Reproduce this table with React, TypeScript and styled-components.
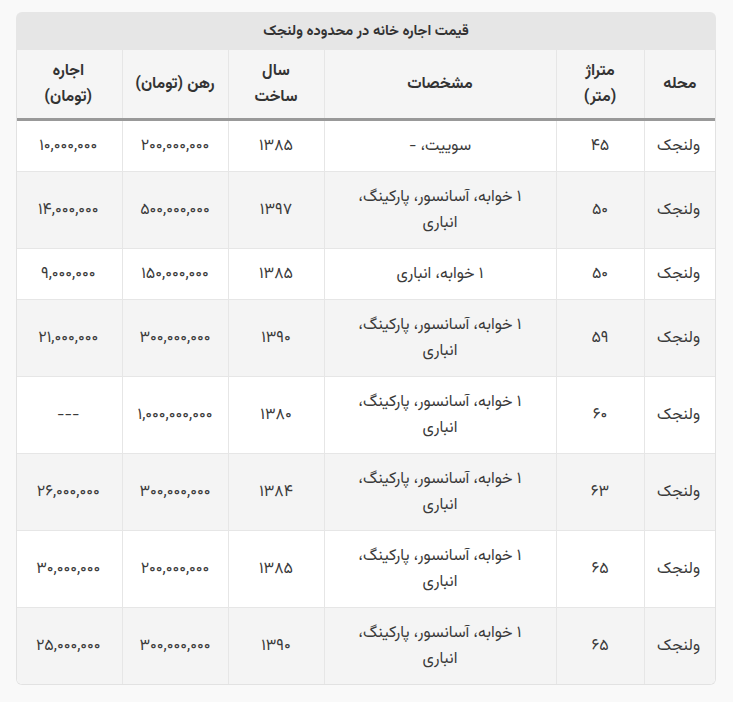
import React from 'react';
import styled, { createGlobalStyle } from 'styled-components';

const GlobalStyle = createGlobalStyle`
  html, body {
    margin: 0;
    padding: 0;
    background: #f9f9f9;
  }
  body {
    font-family: Vazirmatn, "DejaVu Sans", sans-serif;
    color: #333;
  }
`;

const Page = styled.div`
  padding: 12px 17px 16px 16px;
  direction: rtl;
`;

const Card = styled.div`
  width: 700px;
`;

const Caption = styled.div`
  height: 38px;
  display: flex;
  align-items: center;
  justify-content: center;
  background: #e6e6e6;
  border-radius: 6px 6px 0 0;
  font-size: 14.5px;
  font-weight: bold;
  color: #333;
`;

const Frame = styled.div`
  border: 1px solid #e2e2e2;
  border-top: none;
  border-radius: 0 0 6px 6px;
  overflow: hidden;
  background: #fff;
`;

const Table = styled.table`
  width: 100%;
  border-collapse: collapse;
  table-layout: fixed;
  font-size: 16px;
`;

const Col = styled.col<{ $w: number }>`
  width: ${(p) => p.$w}px;
`;

const HeadCell = styled.th`
  background: #f5f5f5;
  border-left: 1px solid #e6e6e6;
  border-bottom: 3px solid #999;
  padding: 9px 12px 7px;
  line-height: 26px;
  height: 52px;
  font-weight: bold;
  color: #333;
  text-align: center;
  &:last-child {
    border-left: none;
  }
`;

const Row = styled.tr<{ $shade: boolean }>`
  background: ${(p) => (p.$shade ? '#f4f4f4' : '#fff')};
`;

const Cell = styled.td`
  border-left: 1px solid #e6e6e6;
  border-top: 1px solid #e6e6e6;
  padding: 13px 15px 11px;
  line-height: 26px;
  text-align: center;
  color: #3a3a3a;
  &:last-child {
    border-left: none;
  }
`;

const full = '۱ خوابه، آسانسور، پارکینگ، انباری';

const columns = [
  { title: 'محله', w: 71 },
  { title: 'متراژ (متر)', w: 88 },
  { title: 'مشخصات', w: 232 },
  { title: 'سال ساخت', w: 96 },
  { title: 'رهن (تومان)', w: 106 },
  { title: 'اجاره (تومان)', w: 107 },
];

const rows = [
  ['ولنجک', '۴۵', 'سوییت، -', '۱۳۸۵', '۲۰۰,۰۰۰,۰۰۰', '۱۰,۰۰۰,۰۰۰'],
  ['ولنجک', '۵۰', full, '۱۳۹۷', '۵۰۰,۰۰۰,۰۰۰', '۱۴,۰۰۰,۰۰۰'],
  ['ولنجک', '۵۰', '۱ خوابه، انباری', '۱۳۸۵', '۱۵۰,۰۰۰,۰۰۰', '۹,۰۰۰,۰۰۰'],
  ['ولنجک', '۵۹', full, '۱۳۹۰', '۳۰۰,۰۰۰,۰۰۰', '۲۱,۰۰۰,۰۰۰'],
  ['ولنجک', '۶۰', full, '۱۳۸۰', '۱,۰۰۰,۰۰۰,۰۰۰', '---'],
  ['ولنجک', '۶۳', full, '۱۳۸۴', '۳۰۰,۰۰۰,۰۰۰', '۲۶,۰۰۰,۰۰۰'],
  ['ولنجک', '۶۵', full, '۱۳۸۵', '۲۰۰,۰۰۰,۰۰۰', '۳۰,۰۰۰,۰۰۰'],
  ['ولنجک', '۶۵', full, '۱۳۹۰', '۳۰۰,۰۰۰,۰۰۰', '۲۵,۰۰۰,۰۰۰'],
];

const App = () => {
  return (
    <>
      <GlobalStyle />
      <Page>
        <Card>
          <Caption>قیمت اجاره خانه در محدوده ولنجک</Caption>
          <Frame>
            <Table>
              <colgroup>
                {columns.map((c) => (
                  <Col key={c.title} $w={c.w} />
                ))}
              </colgroup>
              <thead>
                <tr>
                  {columns.map((c) => (
                    <HeadCell key={c.title}>{c.title}</HeadCell>
                  ))}
                </tr>
              </thead>
              <tbody>
                {rows.map((r, i) => (
                  <Row key={i} $shade={i % 2 === 1}>
                    {r.map((v, j) => (
                      <Cell key={j}>{v}</Cell>
                    ))}
                  </Row>
                ))}
              </tbody>
            </Table>
          </Frame>
        </Card>
      </Page>
    </>
  );
};

export default App;
